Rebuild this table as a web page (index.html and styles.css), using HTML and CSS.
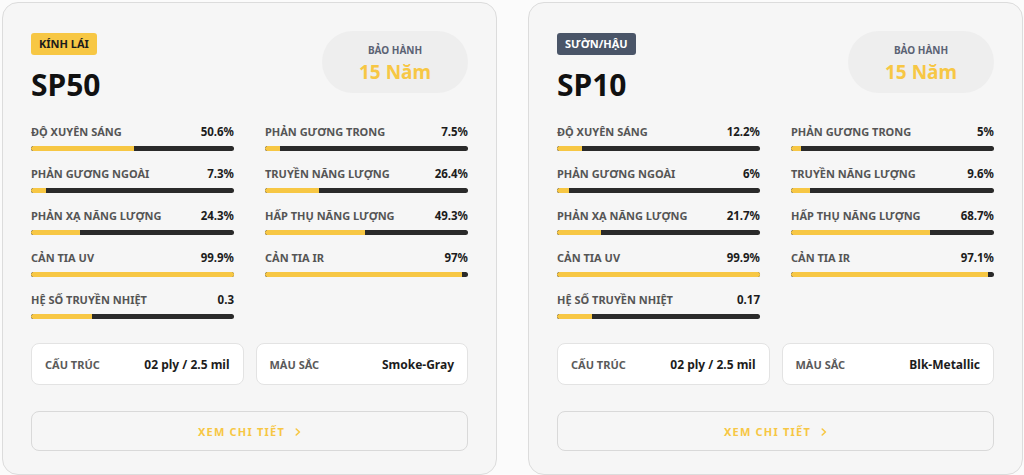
FILE: index.html
```html
<!DOCTYPE html>
<html lang="vi">
<head>
<meta charset="utf-8">
<title>So sánh phim cách nhiệt</title>
<link rel="stylesheet" href="styles.css">
</head>
<body>
<div class="grid">
  <section class="card">
    <div class="head">
      <div class="head-left">
        <span class="badge badge-yellow">KÍNH LÁI</span>
        <h2 class="name">SP50</h2>
      </div>
      <div class="warranty">
        <span class="w-label">BẢO HÀNH</span>
        <span class="w-value">15 Năm</span>
      </div>
    </div>
    <div class="stats">
      <div class="stat"><div class="stat-row"><span class="stat-label">ĐỘ XUYÊN SÁNG</span><span class="stat-value">50.6%</span></div><div class="track"><div class="fill" style="width:50.6%"></div></div></div>
      <div class="stat"><div class="stat-row"><span class="stat-label">PHẢN GƯƠNG TRONG</span><span class="stat-value">7.5%</span></div><div class="track"><div class="fill" style="width:7.5%"></div></div></div>
      <div class="stat"><div class="stat-row"><span class="stat-label">PHẢN GƯƠNG NGOÀI</span><span class="stat-value">7.3%</span></div><div class="track"><div class="fill" style="width:7.3%"></div></div></div>
      <div class="stat"><div class="stat-row"><span class="stat-label">TRUYỀN NĂNG LƯỢNG</span><span class="stat-value">26.4%</span></div><div class="track"><div class="fill" style="width:26.4%"></div></div></div>
      <div class="stat"><div class="stat-row"><span class="stat-label">PHẢN XẠ NĂNG LƯỢNG</span><span class="stat-value">24.3%</span></div><div class="track"><div class="fill" style="width:24.3%"></div></div></div>
      <div class="stat"><div class="stat-row"><span class="stat-label">HẤP THỤ NĂNG LƯỢNG</span><span class="stat-value">49.3%</span></div><div class="track"><div class="fill" style="width:49.3%"></div></div></div>
      <div class="stat"><div class="stat-row"><span class="stat-label">CẢN TIA UV</span><span class="stat-value">99.9%</span></div><div class="track"><div class="fill" style="width:99.9%"></div></div></div>
      <div class="stat"><div class="stat-row"><span class="stat-label">CẢN TIA IR</span><span class="stat-value">97%</span></div><div class="track"><div class="fill" style="width:97%"></div></div></div>
      <div class="stat"><div class="stat-row"><span class="stat-label">HỆ SỐ TRUYỀN NHIỆT</span><span class="stat-value">0.3</span></div><div class="track"><div class="fill" style="width:30%"></div></div></div>
    </div>
    <div class="info">
      <div class="info-box"><span class="info-label">CẤU TRÚC</span><span class="info-value">02 ply / 2.5 mil</span></div>
      <div class="info-box"><span class="info-label">MÀU SẮC</span><span class="info-value">Smoke-Gray</span></div>
    </div>
    <button class="more" type="button">XEM CHI TIẾT <svg class="chev" viewBox="0 0 6 8" width="6" height="8"><path d="M1.2 1 L4.4 4 L1.2 7" fill="none" stroke="currentColor" stroke-width="1.6" stroke-linecap="round" stroke-linejoin="round"/></svg></button>
  </section>

  <section class="card">
    <div class="head">
      <div class="head-left">
        <span class="badge badge-slate">SƯỜN/HẬU</span>
        <h2 class="name">SP10</h2>
      </div>
      <div class="warranty">
        <span class="w-label">BẢO HÀNH</span>
        <span class="w-value">15 Năm</span>
      </div>
    </div>
    <div class="stats">
      <div class="stat"><div class="stat-row"><span class="stat-label">ĐỘ XUYÊN SÁNG</span><span class="stat-value">12.2%</span></div><div class="track"><div class="fill" style="width:12.2%"></div></div></div>
      <div class="stat"><div class="stat-row"><span class="stat-label">PHẢN GƯƠNG TRONG</span><span class="stat-value">5%</span></div><div class="track"><div class="fill" style="width:5%"></div></div></div>
      <div class="stat"><div class="stat-row"><span class="stat-label">PHẢN GƯƠNG NGOÀI</span><span class="stat-value">6%</span></div><div class="track"><div class="fill" style="width:6%"></div></div></div>
      <div class="stat"><div class="stat-row"><span class="stat-label">TRUYỀN NĂNG LƯỢNG</span><span class="stat-value">9.6%</span></div><div class="track"><div class="fill" style="width:9.6%"></div></div></div>
      <div class="stat"><div class="stat-row"><span class="stat-label">PHẢN XẠ NĂNG LƯỢNG</span><span class="stat-value">21.7%</span></div><div class="track"><div class="fill" style="width:21.7%"></div></div></div>
      <div class="stat"><div class="stat-row"><span class="stat-label">HẤP THỤ NĂNG LƯỢNG</span><span class="stat-value">68.7%</span></div><div class="track"><div class="fill" style="width:68.7%"></div></div></div>
      <div class="stat"><div class="stat-row"><span class="stat-label">CẢN TIA UV</span><span class="stat-value">99.9%</span></div><div class="track"><div class="fill" style="width:99.9%"></div></div></div>
      <div class="stat"><div class="stat-row"><span class="stat-label">CẢN TIA IR</span><span class="stat-value">97.1%</span></div><div class="track"><div class="fill" style="width:97.1%"></div></div></div>
      <div class="stat"><div class="stat-row"><span class="stat-label">HỆ SỐ TRUYỀN NHIỆT</span><span class="stat-value">0.17</span></div><div class="track"><div class="fill" style="width:17%"></div></div></div>
    </div>
    <div class="info">
      <div class="info-box"><span class="info-label">CẤU TRÚC</span><span class="info-value">02 ply / 2.5 mil</span></div>
      <div class="info-box"><span class="info-label">MÀU SẮC</span><span class="info-value">Blk-Metallic</span></div>
    </div>
    <button class="more" type="button">XEM CHI TIẾT <svg class="chev" viewBox="0 0 6 8" width="6" height="8"><path d="M1.2 1 L4.4 4 L1.2 7" fill="none" stroke="currentColor" stroke-width="1.6" stroke-linecap="round" stroke-linejoin="round"/></svg></button>
  </section>
</div>
</body>
</html>
```

FILE: styles.css
```css
* { box-sizing: border-box; }
html, body { margin: 0; padding: 0; }
body {
  background: #fbfbfb;
  font-family: "Noto Sans", "Open Sans", sans-serif;
  color: #1a1a1a;
}
.grid {
  display: grid;
  grid-template-columns: 495px 495px;
  column-gap: 31px;
  padding: 2px 0 0 2px;
}
.card {
  background: #f6f6f6;
  border: 1px solid #dcdcdc;
  border-radius: 16px;
  padding: 30px 28px 23px;
  display: flex;
  flex-direction: column;
}
.head {
  display: flex;
  justify-content: space-between;
  align-items: flex-start;
}
.head-left {
  display: flex;
  flex-direction: column;
  align-items: flex-start;
}
.badge {
  display: inline-block;
  height: 22px;
  line-height: 22px;
  padding: 0 8px;
  border-radius: 3px;
  font-size: 11px;
  font-weight: 700;
}
.badge-yellow { background: #f7c744; color: #1c1c1c; }
.badge-slate { background: #4a5568; color: #ffffff; }
.name {
  margin: 13px 0 0;
  font-size: 30px;
  line-height: 34px;
  font-weight: 700;
  color: #111;
}
.warranty {
  margin-top: -2px;
  width: 146px;
  height: 62px;
  border-radius: 31px;
  background: #eeeeee;
  display: flex;
  flex-direction: column;
  align-items: center;
  justify-content: center;
  padding-top: 3px;
}
.w-label {
  font-size: 10px;
  font-weight: 700;
  color: #5b6274;
  line-height: 14px;
}
.w-value {
  font-size: 19px;
  font-weight: 700;
  color: #f7c744;
  line-height: 24px;
  margin-top: 3px;
}
.stats {
  margin-top: 21px;
  display: grid;
  grid-template-columns: 1fr 1fr;
  column-gap: 31px;
  row-gap: 14px;
}
.stat-row {
  display: flex;
  justify-content: space-between;
  align-items: center;
  height: 16px;
}
.stat-label {
  font-size: 11px;
  font-weight: 700;
  color: #555;
}
.stat-value {
  font-size: 11.5px;
  font-weight: 700;
  color: #1c1c1c;
}
.track {
  margin-top: 7px;
  height: 5px;
  border-radius: 3px;
  background: #2a2a2a;
  overflow: hidden;
}
.fill {
  height: 100%;
  background: #f7c744;
  border-radius: 3px 0 0 3px;
}
.info {
  margin-top: 24px;
  display: grid;
  grid-template-columns: 1fr 1fr;
  column-gap: 12px;
}
.info-box {
  height: 42px;
  background: #ffffff;
  border: 1px solid #e3e3e3;
  border-radius: 8px;
  padding: 0 13px 0 13px;
  display: flex;
  justify-content: space-between;
  align-items: center;
}
.info-label {
  font-size: 11px;
  font-weight: 700;
  color: #5a5a5a;
}
.info-value {
  font-size: 12px;
  font-weight: 700;
  color: #1c1c1c;
}
.more {
  margin-top: 26px;
  height: 40px;
  width: 100%;
  background: #f6f6f6;
  border: 1px solid #d9d9d9;
  border-radius: 8px;
  font-family: inherit;
  font-size: 11px;
  font-weight: 700;
  letter-spacing: 1.2px;
  color: #f7c744;
  cursor: pointer;
  display: flex;
  align-items: center;
  justify-content: center;
  gap: 10px;
}
.chev {
  display: block;
  margin-top: 2px;
}
```
